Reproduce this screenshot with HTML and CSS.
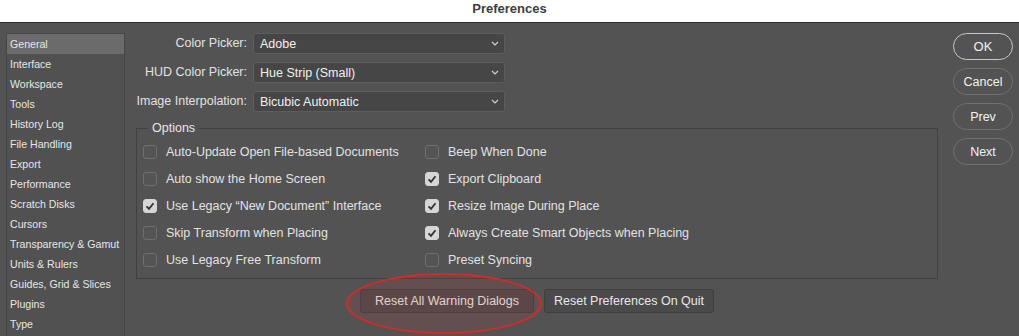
FILE: index.html
```html
<!DOCTYPE html>
<html lang="en">
<head>
  <meta charset="UTF-8" />
  <title>Preferences</title>
  <link rel="stylesheet" href="styles.css">
</head>
<body>
  <header class="titlebar">Preferences</header>

  <div class="main">
    <ul class="sidebar">
      <li class="active">General</li>
      <li>Interface</li>
      <li>Workspace</li>
      <li>Tools</li>
      <li>History Log</li>
      <li>File Handling</li>
      <li>Export</li>
      <li>Performance</li>
      <li>Scratch Disks</li>
      <li>Cursors</li>
      <li>Transparency &amp; Gamut</li>
      <li>Units &amp; Rulers</li>
      <li>Guides, Grid &amp; Slices</li>
      <li>Plugins</li>
      <li>Type</li>
    </ul>

    <div class="content">
      <div class="form">
        <label>Color Picker:</label>
        <div class="select">Adobe <svg class="chev" width="8" height="5" viewBox="0 0 8 5"><polyline points="1,1 4,4 7,1" /></svg></div>
        <label>HUD Color Picker:</label>
        <div class="select">Hue Strip (Small) <svg class="chev" width="8" height="5" viewBox="0 0 8 5"><polyline points="1,1 4,4 7,1" /></svg></div>
        <label>Image Interpolation:</label>
        <div class="select">Bicubic Automatic <svg class="chev" width="8" height="5" viewBox="0 0 8 5"><polyline points="1,1 4,4 7,1" /></svg></div>
      </div>

      <fieldset class="options">
        <legend>Options</legend>
        <div class="check"><span class="box"></span>Auto-Update Open File-based Documents</div>
        <div class="check"><span class="box"></span>Beep When Done</div>
        <div class="check"><span class="box"></span>Auto show the Home Screen</div>
        <div class="check"><span class="box on"></span>Export Clipboard</div>
        <div class="check"><span class="box on"></span>Use Legacy “New Document” Interface</div>
        <div class="check"><span class="box on"></span>Resize Image During Place</div>
        <div class="check"><span class="box"></span>Skip Transform when Placing</div>
        <div class="check"><span class="box on"></span>Always Create Smart Objects when Placing</div>
        <div class="check"><span class="box"></span>Use Legacy Free Transform</div>
        <div class="check"><span class="box"></span>Preset Syncing</div>
      </fieldset>

      <div class="resets">
        <div class="marked">
          <button class="btn">Reset All Warning Dialogs</button>
          <span class="ring"></span>
        </div>
        <button class="btn quit">Reset Preferences On Quit</button>
      </div>
    </div>

    <div class="actions">
      <button class="pill default">OK</button>
      <button class="pill">Cancel</button>
      <button class="pill">Prev</button>
      <button class="pill">Next</button>
    </div>
  </div>
</body>
</html>
```

FILE: styles.css
```css
html, body {
  margin: 0;
  padding: 0;
  width: 100%;
  height: 100%;
  background: #535353;
  color: #e2e2e2;
  font-family: 'Liberation Sans', Arial, sans-serif;
  font-size: 12.5px;
  overflow: hidden;
}

.titlebar {
  height: 22px;
  line-height: 18px;
  background: #ffffff;
  color: #3e3e3e;
  font-weight: bold;
  font-size: 13px;
  text-align: center;
  border-bottom: 1px solid #2c2c2c;
}

.main {
  display: flex;
  padding: 10px 0 0 6px;
}

/* Sidebar */
.sidebar {
  list-style: none;
  margin: 0;
  padding: 0;
  width: 117px;
  height: 310px;
  border: 1px solid #464646;
  border-bottom: none;
  background: #515151;
  font-size: 10.6px;
  color: #e6e6e6;
}

.sidebar li {
  height: 20px;
  line-height: 20px;
  padding-left: 3px;
  white-space: nowrap;
}

.sidebar li.active {
  background: #6b6b6b;
}

/* Content */
.content {
  width: 802px;
  padding-left: 11px;
  display: flex;
  flex-direction: column;
}

.form {
  display: grid;
  grid-template-columns: 114px 252px;
  grid-auto-rows: 21px;
  column-gap: 6px;
  row-gap: 8px;
  margin-left: -3px;
}

.form label {
  text-align: right;
  line-height: 21px;
  white-space: nowrap;
}

.select {
  position: relative;
  height: 19px;
  line-height: 20px;
  padding-left: 6px;
  background: #464646;
  border: 1px solid #5d5d5d;
  border-radius: 3px;
  color: #f0f0f0;
}

.chev {
  position: absolute;
  right: 5px;
  top: 7px;
}

.chev polyline {
  fill: none;
  stroke: #cfcfcf;
  stroke-width: 1.2;
}

/* Options group */
.options {
  margin: 9px 0 0;
  padding: 2px 0 5px 6px;
  border: 1px solid #414141;
  display: grid;
  grid-template-columns: 282px 1fr;
}

.options legend {
  padding: 0 4px;
  margin-left: 5px;
  line-height: 15px;
  color: #e6e6e6;
}

.check {
  display: flex;
  align-items: center;
  height: 27px;
  gap: 9px;
  white-space: nowrap;
}

.box {
  width: 12px;
  height: 12px;
  border: 1px solid #6f6f6f;
  border-radius: 3px;
  background: #545454;
  flex-shrink: 0;
}

.box.on {
  border-color: #d6d6d6;
  background: #d6d6d6 url("data:image/svg+xml,%3Csvg xmlns='http://www.w3.org/2000/svg' width='12' height='12'%3E%3Cpolyline points='2.5,6.3 5,8.8 9.5,3.2' fill='none' stroke='%23333' stroke-width='1.8'/%3E%3C/svg%3E") center no-repeat;
}

/* Reset buttons */
.resets {
  display: flex;
  justify-content: center;
  gap: 10px;
  margin-top: 10px;
}

.btn {
  height: 24px;
  padding: 0;
  font-family: inherit;
  font-size: 12.5px;
  color: #e8e8e8;
  background: #4a4a4a;
  border: 1px solid #3f3f3f;
  border-radius: 3px;
}

.marked {
  position: relative;
}

.marked .btn {
  width: 174px;
}

.btn.quit {
  width: 170px;
}

.ring {
  position: absolute;
  left: -14px;
  top: -16px;
  width: 192px;
  height: 57px;
  border: 2px solid #d42a2a;
  border-radius: 50%;
  background: rgba(200, 60, 60, 0.14);
  pointer-events: none;
}

/* Dialog actions */
.actions {
  display: flex;
  flex-direction: column;
  gap: 8px;
  margin-left: 15px;
}

.pill {
  width: 60px;
  height: 27px;
  font-family: inherit;
  font-size: 12.5px;
  color: #f2f2f2;
  background: transparent;
  border: 1px solid #707070;
  border-radius: 14px;
}

.pill.default {
  border-color: #c8c8c8;
  font-size: 13px;
}
```
